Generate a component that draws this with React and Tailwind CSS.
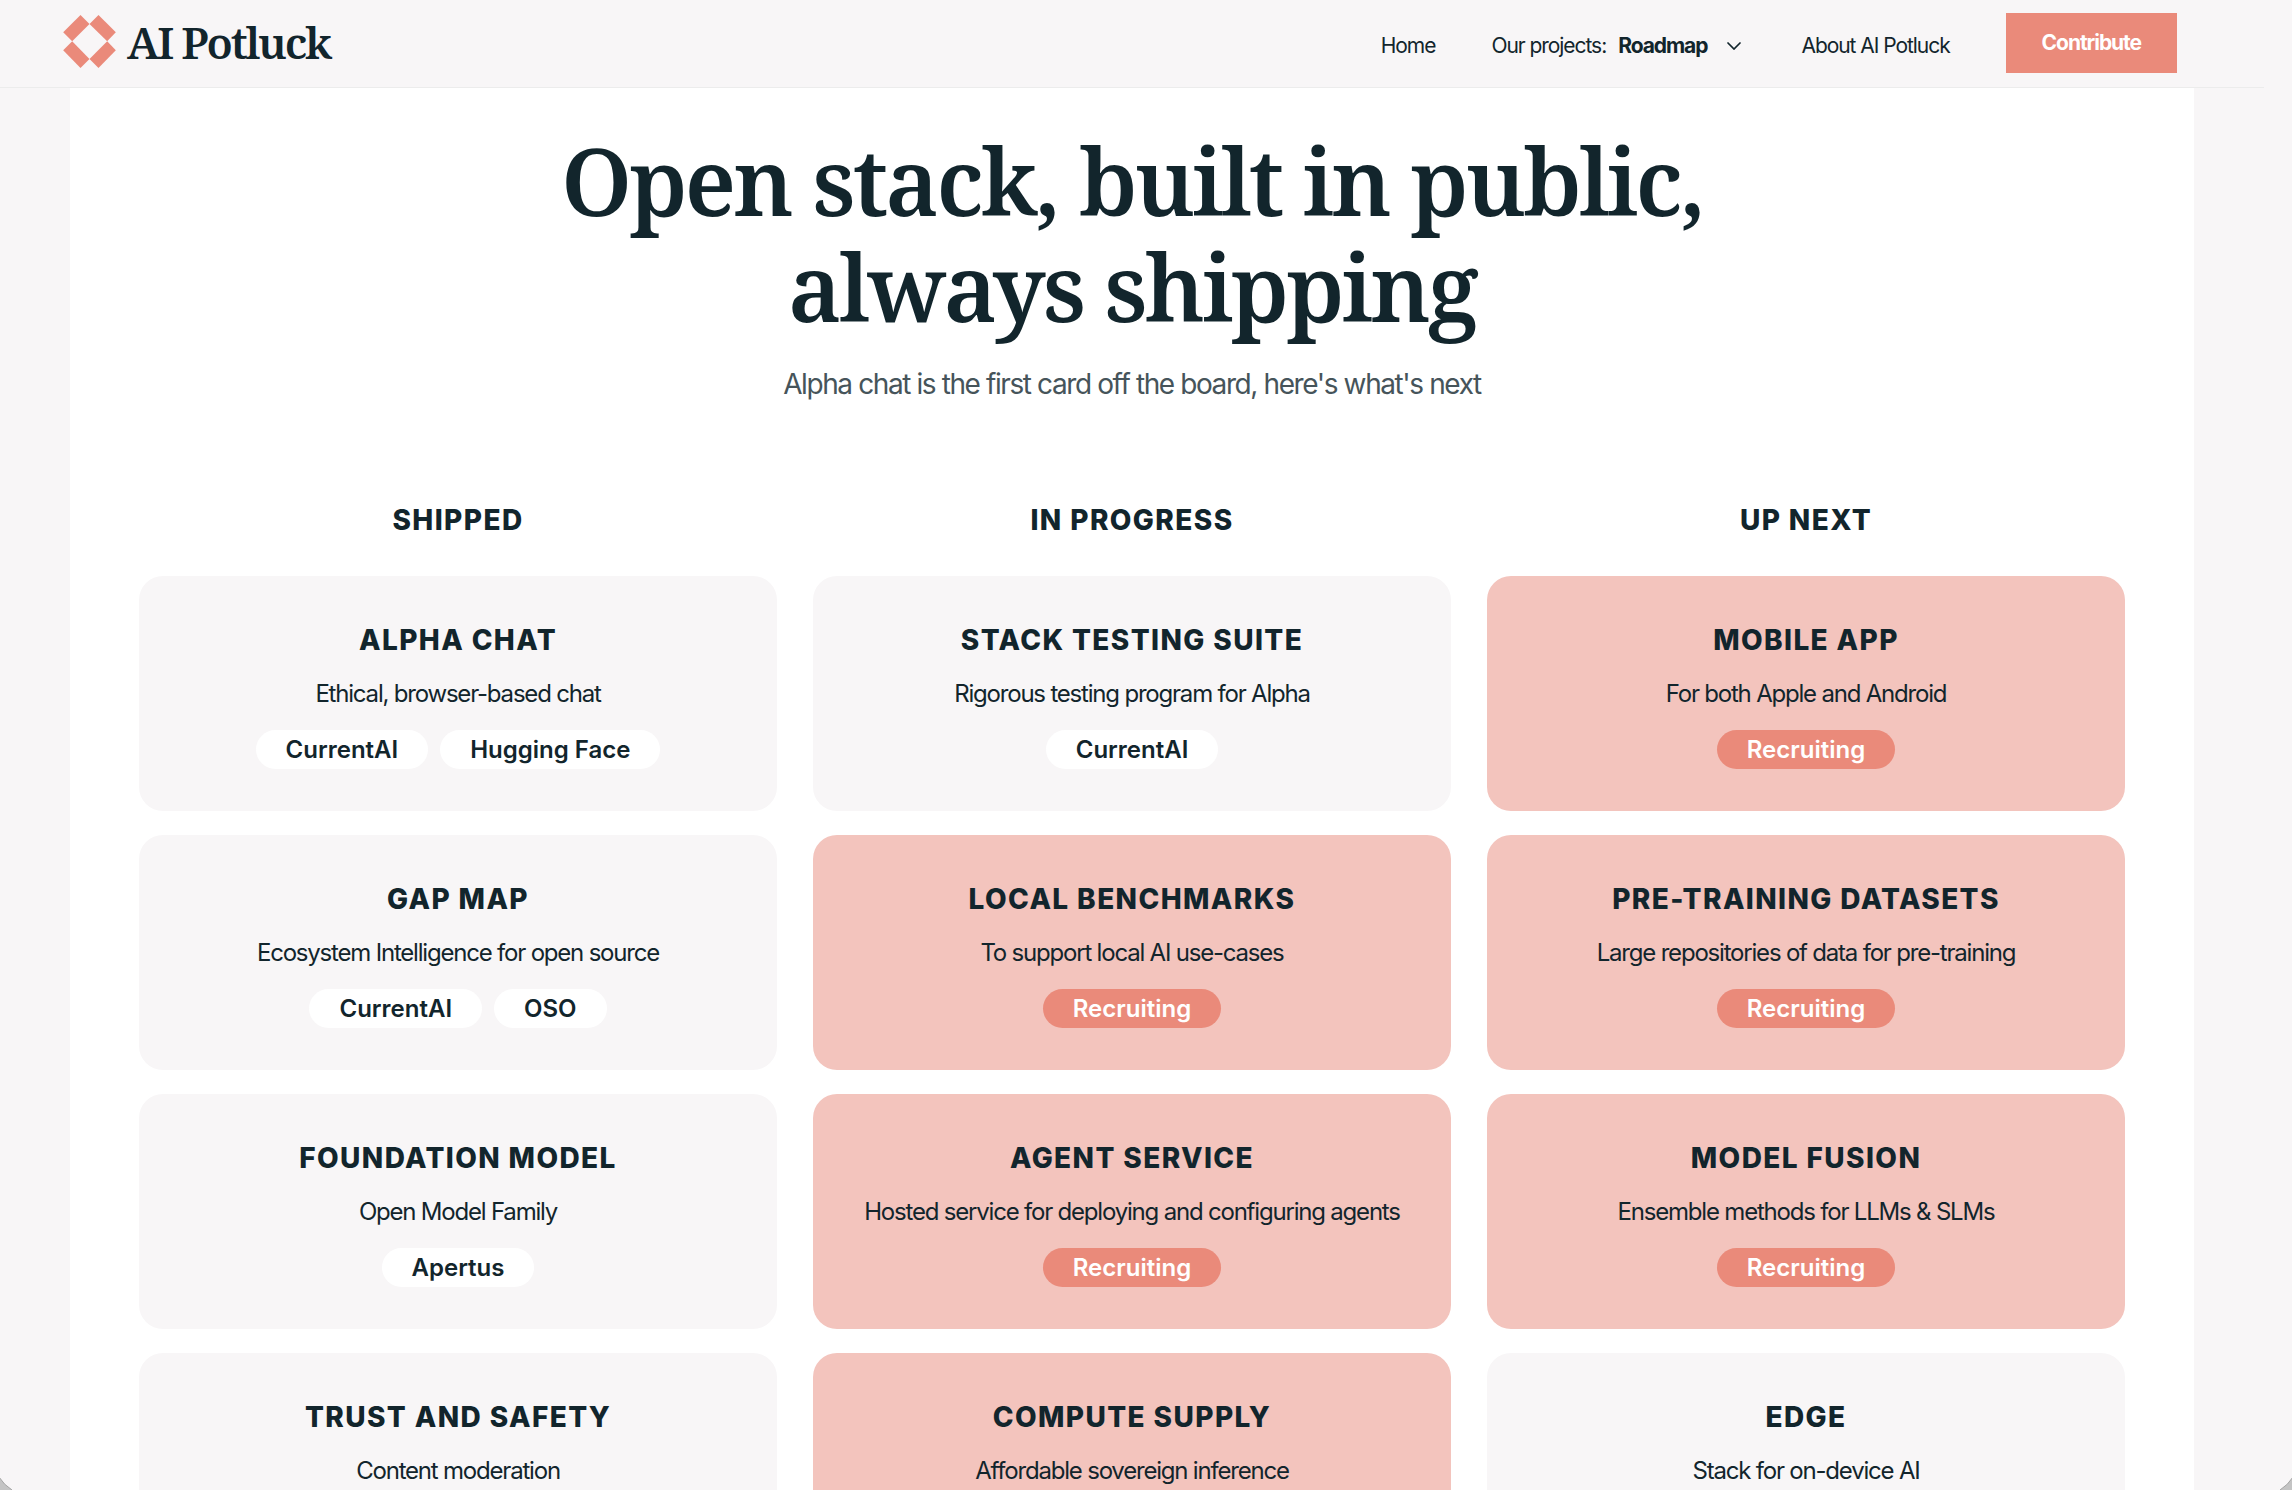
import clsx from 'clsx';

const columns = [
  {
    title: 'Shipped',
    cards: [
      { title: 'Alpha Chat', description: 'Ethical, browser-based chat', tags: ['CurrentAI', 'Hugging Face'] },
      { title: 'Gap Map', description: 'Ecosystem Intelligence for open source', tags: ['CurrentAI', 'OSO'] },
      { title: 'Foundation Model', description: 'Open Model Family', tags: ['Apertus'] },
      { title: 'Trust and Safety', description: 'Content moderation', tags: [] }
    ]
  },
  {
    title: 'In Progress',
    cards: [
      { title: 'Stack Testing Suite', description: 'Rigorous testing program for Alpha', tags: ['CurrentAI'] },
      { title: 'Local Benchmarks', description: 'To support local AI use-cases', recruiting: true, tags: ['Recruiting'] },
      { title: 'Agent Service', description: 'Hosted service for deploying and configuring agents', recruiting: true, tags: ['Recruiting'] },
      { title: 'Compute Supply', description: 'Affordable sovereign inference', recruiting: true, tags: [] }
    ]
  },
  {
    title: 'Up Next',
    cards: [
      { title: 'Mobile App', description: 'For both Apple and Android', recruiting: true, tags: ['Recruiting'] },
      { title: 'Pre-training Datasets', description: 'Large repositories of data for pre-training', recruiting: true, tags: ['Recruiting'] },
      { title: 'Model Fusion', description: 'Ensemble methods for LLMs & SLMs', recruiting: true, tags: ['Recruiting'] },
      { title: 'Edge', description: 'Stack for on-device AI', tags: [] }
    ]
  }
];

function Logo() {
  return (
    <a href="#" className="flex items-center gap-[11px] pb-1.5">
      <svg viewBox="0 0 158 159" className="w-[53px] h-[53px]" fill="#ea8a7a" aria-hidden="true">
        <path d="M52 0 79 27 27 79 0 52Z" />
        <path d="M106 0 158 52 132 79 79 27Z" />
        <path d="M27 79 79 132 52 159 0 106Z" />
        <path d="M132 79 158 106 106 159 79 132Z" />
      </svg>
      <span className="font-['Noto_Serif',serif] text-[44px] leading-[52px] font-semibold tracking-tighter">
        AI Potluck
      </span>
    </a>
  );
}

function Header() {
  return (
    <header className="flex items-center justify-between h-[88px] pt-0.5 pl-[63px] pr-[87px] border-b border-[#ececec]">
      <Logo />
      <nav className="flex items-center gap-14 text-[21px] leading-7 tracking-tighter">
        <a href="#" className="pt-0.5">Home</a>
        <button type="button" className="flex items-center gap-3 pt-0.5 pr-1 tracking-tighter">
          <span>Our projects:</span>
          <span className="font-bold">Roadmap</span>
          <svg viewBox="0 0 14 8" className="w-[14px] h-2 ml-2" fill="none" stroke="currentColor" strokeWidth="1.7" aria-hidden="true">
            <path d="M1 1 7 7 13 1" strokeLinecap="round" />
          </svg>
        </button>
        <a href="#" className="pt-0.5">About AI Potluck</a>
        <a href="#" className="mb-1 px-9 py-4 bg-[#ea8a7a] text-white font-bold">Contribute</a>
      </nav>
    </header>
  );
}

function Card({ card }) {
  return (
    <article
      className={clsx(
        'flex flex-col items-center px-6 pt-[46px] pb-[42px] rounded-3xl',
        card.recruiting ? 'bg-[#f3c4bd]' : 'bg-[#f8f6f7]'
      )}
    >
      <h3 className="text-[28px] leading-9 font-extrabold uppercase tracking-wider">{card.title}</h3>
      <p className="mt-5 text-2xl tracking-tighter">{card.description}</p>
      {card.tags.length > 0 && (
        <div className="flex gap-3 mt-5">
          {card.tags.map((tag) => (
            <span
              key={tag}
              className={clsx(
                'px-[30px] rounded-full text-2xl leading-[39px] font-semibold',
                card.recruiting ? 'bg-[#ea8a7a] text-white' : 'bg-white'
              )}
            >
              {tag}
            </span>
          ))}
        </div>
      )}
    </article>
  );
}

export default function App() {
  return (
    <div className="h-screen overflow-hidden bg-[#f8f6f7] text-[#12252c] font-[Inter,sans-serif]">
      <div className="pr-7">
        <Header />
        <main className="mx-[70px] px-[69px] pt-10 pb-24 bg-white">
          <div className="text-center">
            <h1 className="font-['Noto_Serif',serif] text-[92px] leading-[106px] font-semibold tracking-[-0.03em]">
              Open stack, built in public,
              <br />
              always shipping
            </h1>
            <p className="mt-6 text-[28px] leading-10 tracking-tighter text-[#46545a]">
              Alpha chat is the first card off the board, here's what's next
            </p>
          </div>
          <div className="grid grid-cols-3 gap-9 mt-[98px]">
            {columns.map((column) => (
              <section key={column.title} className="flex flex-col gap-6">
                <h2 className="mb-3.5 text-center text-[28px] leading-9 font-extrabold uppercase tracking-wider">
                  {column.title}
                </h2>
                {column.cards.map((card) => (
                  <Card key={card.title} card={card} />
                ))}
              </section>
            ))}
          </div>
        </main>
      </div>
      <svg viewBox="0 0 12 14" className="fixed bottom-0 left-0 w-3 h-3.5" fill="#c4c4c4" stroke="#a3a3a3" aria-hidden="true">
        <path d="M-1 1Q4 9 12 14V16H-1Z" />
      </svg>
      <svg viewBox="0 0 12 14" className="fixed bottom-0 right-0 w-3 h-3.5" fill="#c4c4c4" stroke="#a3a3a3" aria-hidden="true">
        <path d="M13 1Q8 9 0 14V16H13Z" />
      </svg>
    </div>
  );
}
